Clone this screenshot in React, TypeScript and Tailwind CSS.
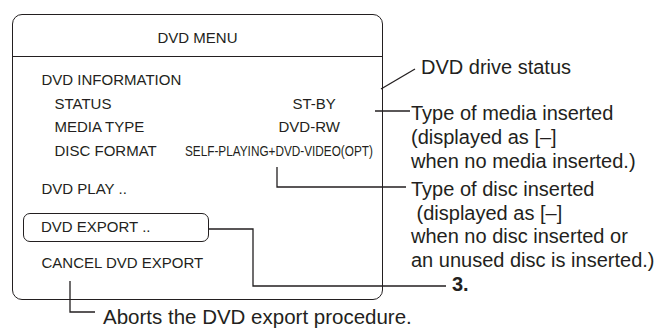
const ink = '#231f20'

function Row({ label, value, offset, narrow = false }: { label: string, value: string, offset: string, narrow?: boolean }) {
  return (
    <div className="grid grid-cols-[130px_1fr] pl-[13px]">
      <div>{label}</div>
      <div className={offset}>
        {narrow
          ? <span className="inline-block origin-left scale-x-[0.785] whitespace-nowrap">{value}</span>
          : value
        }
      </div>
    </div>
  )
}

function Connectors() {
  return (
    <svg
      className="absolute inset-0 pointer-events-none"
      width={658}
      height={331}
      viewBox="0 0 658 331"
      fill="none"
      stroke={ink}
      strokeWidth={1.3}
    >
      {/* DVD drive status */}
      <path d="M381 89 L415 69" />
      {/* media type */}
      <path d="M375 111 H410" />
      {/* disc format */}
      <path d="M277 167 V187 H406" />
      {/* DVD EXPORT -> 3. */}
      <path d="M209 229 H253 V286 H446" />
      {/* cancel */}
      <path d="M70 281 V312 H95" />
    </svg>
  )
}

export default function App() {
  return (
    <div
      className="relative w-[658px] h-[331px] bg-white overflow-hidden"
      style={{ fontFamily: '"Liberation Sans", Arial, sans-serif', color: ink }}
    >
      <div className="flex">
        <div className="flex flex-col w-[383px] shrink-0">
          {/* menu panel */}
          <div className="ml-[12px] mt-[14px] w-[371px] h-[286px] rounded-[10px] border-[1.5px] border-[#231f20] text-[15px]">
            <div className="h-[42px] border-b-[1.5px] border-[#231f20] pt-[13.5px] leading-[18px] text-center">
              DVD MENU
            </div>

            <div className="pl-[28.5px] pt-[11px] leading-[23.7px]">
              <div>DVD INFORMATION</div>
              <Row label="STATUS" value="ST-BY" offset="pl-[108px]" />
              <Row label="MEDIA TYPE" value="DVD-RW" offset="pl-[94px]" />
              <Row label="DISC FORMAT" value="SELF-PLAYING+DVD-VIDEO(OPT)" offset="" narrow />

              <div className="mt-[14px]">DVD PLAY ..</div>
            </div>

            <div className="ml-[9.5px] mt-[12.5px] w-[186px] h-[29px] rounded-[7px] border-[1.5px] border-[#231f20] pl-[17.5px] leading-[26px]">
              DVD EXPORT ..
            </div>

            <div className="pl-[28.5px] mt-[8.5px] leading-[23.7px]">
              CANCEL DVD EXPORT
            </div>
          </div>

          <div className="ml-[103px] mt-[5px] text-[20.5px] leading-[24px] whitespace-nowrap">
            Aborts the DVD export procedure.
          </div>
        </div>

        {/* annotations */}
        <div className="ml-[28px] text-[20px] whitespace-nowrap">
          <div className="mt-[55px] pl-[10px] leading-[24px]">DVD drive status</div>

          <div className="mt-[22px] leading-[24px]">
            <div>Type of media inserted</div>
            <div>(displayed as [–]</div>
            <div>when no media inserted.)</div>
          </div>

          <div className="mt-[5px] leading-[23.5px]">
            <div>Type of disc inserted</div>
            <div>&nbsp;(displayed as [–]</div>
            <div>when no disc inserted or</div>
            <div>an unused disc is inserted.)</div>
          </div>

          <div className="pl-[41px] leading-[24px] font-bold">3.</div>
        </div>
      </div>

      <Connectors />
    </div>
  )
}
